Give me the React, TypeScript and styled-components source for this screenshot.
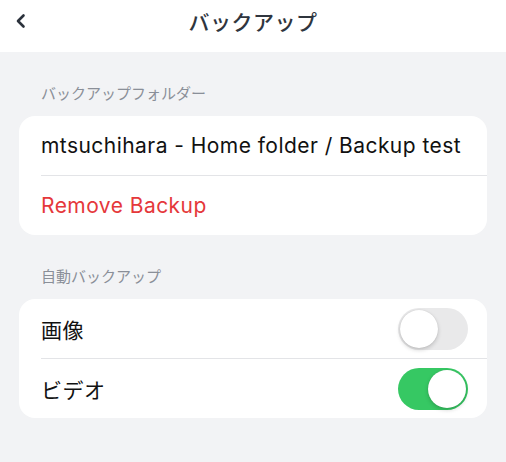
import React, { useState } from 'react';
import styled, { createGlobalStyle } from 'styled-components';

const GlobalStyle = createGlobalStyle`
	html, body {
		margin: 0;
		padding: 0;
		background: #f2f3f5;
		font-family: Inter, "Noto Sans CJK JP", sans-serif;
		-webkit-font-smoothing: antialiased;
	}
`;

const Page = styled.div`
	width: 506px;
	min-height: 462px;
	background: #f2f3f5;
`;

const Header = styled.header`
	height: 52px;
	background: #fff;
	display: grid;
	grid-template-columns: 52px 1fr 52px;
	align-items: center;
`;

const BackButton = styled.button`
	border: none;
	background: none;
	padding: 0 0 10px 14px;
	display: flex;
	align-items: center;
	color: #2b323c;
	cursor: pointer;
`;

const Title = styled.h1`
	margin: 0 0 10px;
	text-align: center;
	font-size: 21px;
	font-weight: 500;
	color: #2f353e;
	letter-spacing: 0.5px;
`;

const Content = styled.main`
	padding: 32px 19px 0;
	display: flex;
	flex-direction: column;
`;

const SectionLabel = styled.div`
	padding: 0 22px;
	font-size: 15px;
	line-height: 20px;
	color: #8a8f98;
	margin-bottom: 12px;
`;

const Card = styled.section`
	background: #fff;
	border-radius: 16px;
	overflow: hidden;
	margin-bottom: 32px;
`;

const Row = styled.div`
	height: 59px;
	margin-left: 22px;
	padding-right: 19px;
	display: flex;
	align-items: center;
	justify-content: space-between;
	& + & {
		border-top: 1px solid #e3e4e7;
	}
`;

const RowText = styled.span<{ $danger?: boolean }>`
	font-size: 21px;
	letter-spacing: 0.45px;
	color: ${p => (p.$danger ? '#e5383b' : '#111')};
`;

const Track = styled.button<{ $on: boolean }>`
	position: relative;
	width: 70px;
	height: 42px;
	border: none;
	padding: 0;
	border-radius: 21px;
	background: ${p => (p.$on ? '#36c863' : '#e9e9ea')};
	cursor: pointer;
	transition: background 0.2s;
`;

const Knob = styled.span<{ $on: boolean }>`
	position: absolute;
	top: 2px;
	left: ${p => (p.$on ? '30px' : '2px')};
	width: 38px;
	height: 38px;
	border-radius: 50%;
	background: #fff;
	box-shadow: 0 2px 4px rgba(0, 0, 0, 0.18), 0 0 1px rgba(0, 0, 0, 0.15);
	transition: left 0.2s;
`;

function Toggle({ on, onChange }: { on: boolean; onChange: () => void }) {
	return (
		<Track $on={on} onClick={onChange} aria-pressed={on}>
			<Knob $on={on} />
		</Track>
	);
}

export default function App() {
	const [images, setImages] = useState(false);
	const [video, setVideo] = useState(true);

	return (
		<Page>
			<GlobalStyle />
			<Header>
				<BackButton aria-label="戻る">
					<svg width="14" height="16" viewBox="0 0 14 16" fill="none">
						<path d="M9.5 2.5L4 8l5.5 5.5" stroke="currentColor" strokeWidth="2.6" strokeLinecap="round" strokeLinejoin="round" />
					</svg>
				</BackButton>
				<Title>バックアップ</Title>
				<span />
			</Header>
			<Content>
				<SectionLabel>バックアップフォルダー</SectionLabel>
				<Card>
					<Row>
						<RowText>mtsuchihara - Home folder / Backup test</RowText>
					</Row>
					<Row>
						<RowText $danger>Remove Backup</RowText>
					</Row>
				</Card>
				<SectionLabel>自動バックアップ</SectionLabel>
				<Card>
					<Row>
						<RowText>画像</RowText>
						<Toggle on={images} onChange={() => setImages(v => !v)} />
					</Row>
					<Row>
						<RowText>ビデオ</RowText>
						<Toggle on={video} onChange={() => setVideo(v => !v)} />
					</Row>
				</Card>
			</Content>
		</Page>
	);
}
